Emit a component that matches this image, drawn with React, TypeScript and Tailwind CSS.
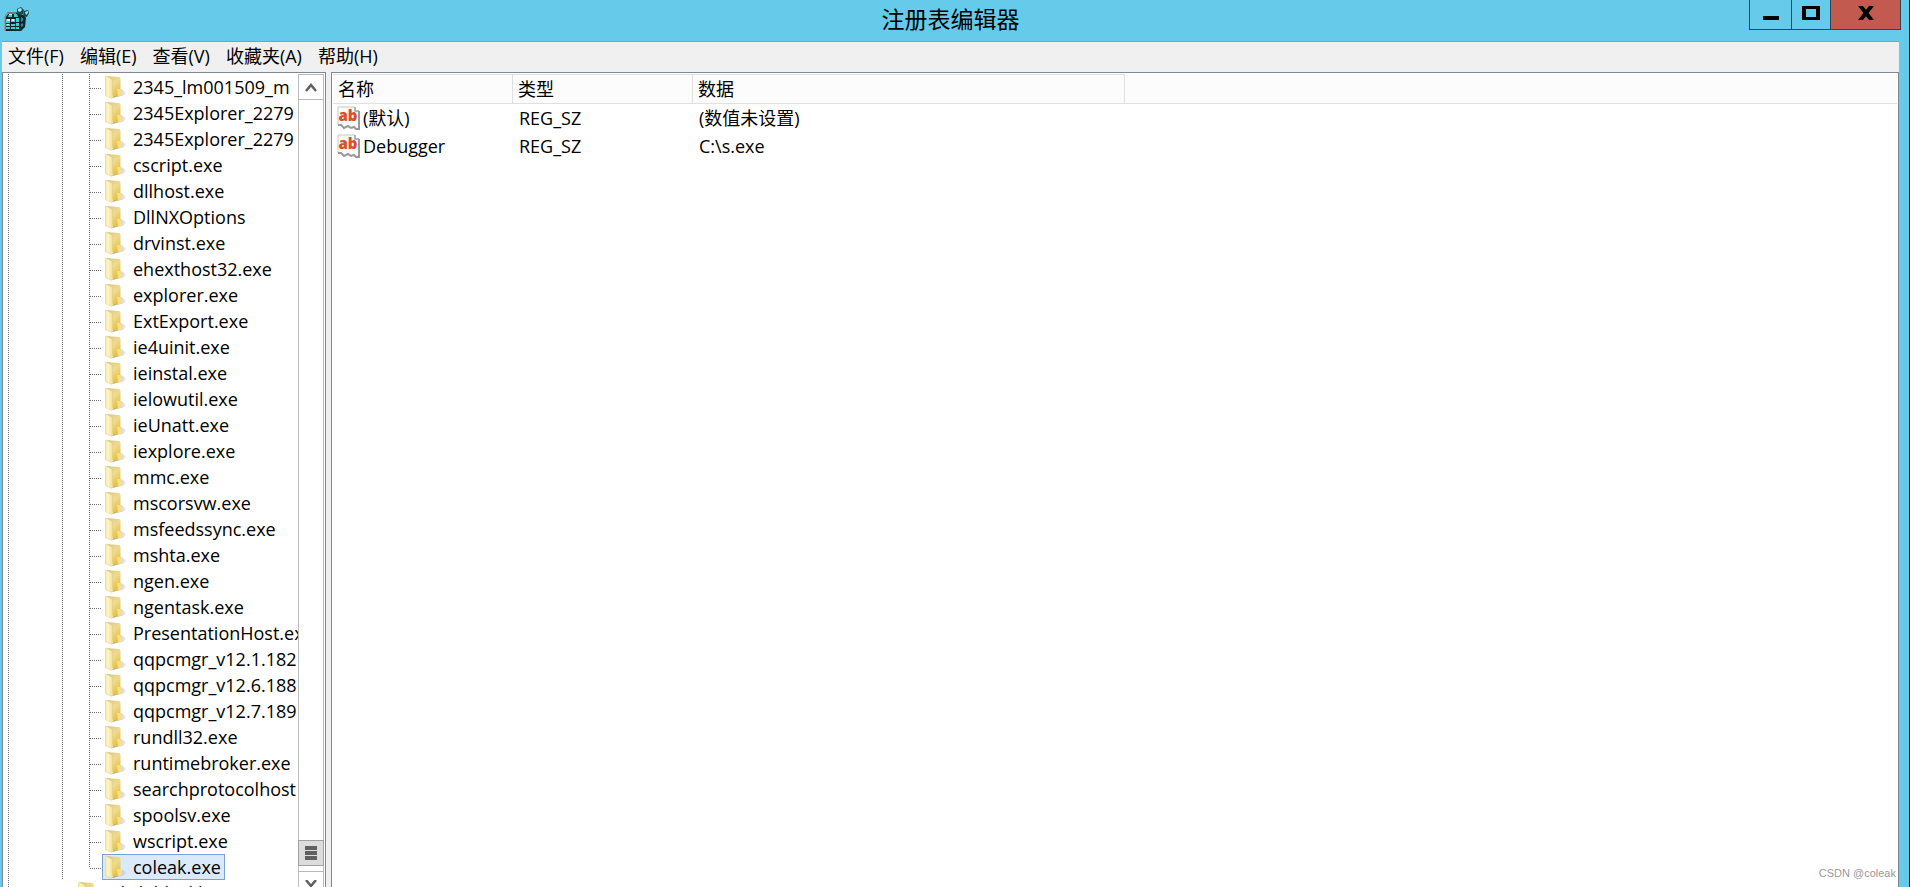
import { clsx } from 'clsx';

const MENUS = ['文件(F)', '编辑(E)', '查看(V)', '收藏夹(A)', '帮助(H)'];

const KEYS = [
  '2345_lm001509_m',
  '2345Explorer_2279',
  '2345Explorer_2279',
  'cscript.exe',
  'dllhost.exe',
  'DllNXOptions',
  'drvinst.exe',
  'ehexthost32.exe',
  'explorer.exe',
  'ExtExport.exe',
  'ie4uinit.exe',
  'ieinstal.exe',
  'ielowutil.exe',
  'ieUnatt.exe',
  'iexplore.exe',
  'mmc.exe',
  'mscorsvw.exe',
  'msfeedssync.exe',
  'mshta.exe',
  'ngen.exe',
  'ngentask.exe',
  'PresentationHost.ex',
  'qqpcmgr_v12.1.182',
  'qqpcmgr_v12.6.188',
  'qqpcmgr_v12.7.189',
  'rundll32.exe',
  'runtimebroker.exe',
  'searchprotocolhost',
  'spoolsv.exe',
  'wscript.exe',
  'coleak.exe',
];

const VALUES = [
  { name: '(默认)', type: 'REG_SZ', data: '(数值未设置)' },
  { name: 'Debugger', type: 'REG_SZ', data: 'C:\\s.exe' },
];

const COLUMNS = ['名称', '类型', '数据'];

// 1px on, 1px off, so the dots run on from row to row
const DOTS_Y = 'w-px shrink-0 bg-[repeating-linear-gradient(180deg,#707070_0_1px,transparent_1px_2px)]';
const DOTS_X = 'h-px shrink-0 bg-[repeating-linear-gradient(90deg,#707070_0_1px,transparent_1px_2px)]';

export default function App() {
  return (
    <div className="flex h-screen flex-col overflow-hidden border-r border-[#1c1c1c] bg-[#66caea] pr-[10px] pl-[2px] font-['Open_Sans','Noto_Sans_CJK_SC',sans-serif] text-[18px] leading-[26px] text-black">
      <TitleBar />

      <div className="flex min-h-0 flex-1 flex-col border-t border-[#7d9fb0] bg-[#f0f0f0]">
        <nav className="flex h-[30px] shrink-0 items-start gap-[16px] pt-px pl-[6px]">
          {MENUS.map((m) => (
            <button key={m} type="button" className="whitespace-nowrap">{m}</button>
          ))}
        </nav>

        <div className="flex min-h-0 flex-1 gap-[5px]">
          <KeyTree />
          <ValueList />
        </div>
      </div>
    </div>
  );
}

function TitleBar() {
  return (
    <header className="grid h-[41px] shrink-0 grid-cols-[1fr_auto_1fr] items-start">
      <RegeditIcon />
      <h1 className="pt-[5px] text-[23px] leading-[28px]">注册表编辑器</h1>
      <div className="-mr-[2px] flex h-[30px] justify-self-end border-x border-b border-[#2d4650]">
        <button type="button" aria-label="最小化" className="flex w-[42px] items-center justify-center border-r border-[#2d4650]">
          <svg width="16" height="16" viewBox="0 0 16 16"><path d="M0 9h16v4H0z" /></svg>
        </button>
        <button type="button" aria-label="最大化" className="flex w-[39px] items-center justify-center border-r border-[#2d4650]">
          <svg width="18" height="18" viewBox="0 0 18 18"><path fillRule="evenodd" d="M0 0h18v14H0zM4 3v8h10V3z" /></svg>
        </button>
        <button type="button" aria-label="关闭" className="flex w-[69px] items-center justify-center bg-[#c35a50]">
          <svg width="16" height="18" viewBox="0 0 16 18"><path d="M0 0h5l3 3.800L11 0h5l-5.500 7 5.500 7h-5l-3-3.800L5 14H0l5.500-7z" /></svg>
        </button>
      </div>
    </header>
  );
}

function KeyTree() {
  return (
    <section aria-label="注册表项" className="flex w-[324px] shrink-0 border border-b-0 border-[#828790] bg-white pt-px pr-px">
      <div className="min-w-0 flex-1 overflow-hidden">
        <ul>
          {KEYS.map((name, i) => {
            const last = i === KEYS.length - 1;
            return (
              <li key={i} className="flex h-[26px]">
                <span className={clsx(DOTS_Y, 'mr-[53px] ml-[5px]')} />
                <span className={clsx(DOTS_Y, 'mr-[26px]')} />
                <span className={clsx(DOTS_Y, last && 'mb-[12px]')} />
                <span className={clsx(DOTS_X, 'mt-[14px] w-[12px]')} />
                <button
                  type="button"
                  className={clsx(
                    'flex items-center gap-[7px] border pr-[3px] pl-[2px] whitespace-nowrap',
                    last ? 'border-[#7da2ce] bg-[#dbe9fd]' : 'border-transparent'
                  )}
                >
                  <FolderIcon />
                  {name}
                </button>
              </li>
            );
          })}
          <li className="flex h-[26px]">
            <span className={clsx(DOTS_Y, 'mr-[66px] ml-[5px]')} />
            <button type="button" className="flex items-center gap-[7px] border border-transparent pl-[2px] whitespace-nowrap">
              <FolderIcon />
              SilFileblockl
            </button>
          </li>
        </ul>
      </div>
      <TreeScrollbar />
    </section>
  );
}

function TreeScrollbar() {
  return (
    <div className="flex w-[26px] shrink-0 flex-col border-x border-[#bcbcbc]">
      <button type="button" aria-label="向上滚动" className="flex h-[26px] shrink-0 items-center justify-center border-y border-[#b9b9b9]">
        <svg width="12" height="10" viewBox="0 0 12 10" fill="none" stroke="#606060" strokeWidth="2.500"><path d="M1 9l5-6 5 6" /></svg>
      </button>
      <div className="flex-1" />
      <div className="-mx-px flex h-[26px] shrink-0 flex-col items-center justify-center gap-px border border-[#a0a0a0] bg-[#dcdcdc]">
        <span className="h-[4px] w-[12px] bg-[#606060]" />
        <span className="h-[4px] w-[12px] bg-[#606060]" />
        <span className="h-[4px] w-[12px] bg-[#606060]" />
      </div>
      <button type="button" aria-label="向下滚动" className="mt-[5px] flex h-[16px] shrink-0 items-end justify-center overflow-hidden border-t border-[#b9b9b9]">
        <svg width="12" height="7" viewBox="0 0 12 7" fill="none" stroke="#606060" strokeWidth="2.500"><path d="M1 0l5 6 5-6" /></svg>
      </button>
    </div>
  );
}

function ValueList() {
  return (
    <section aria-label="值" className="relative min-w-0 flex-1 border border-b-0 border-[#828790] bg-white px-px pt-px">
      <table className="w-full table-fixed border-separate border-spacing-0 text-left">
        <thead>
          <tr className="h-[30px] bg-[#fcfcfc]">
            {COLUMNS.map((c, i) => (
              <th
                key={c}
                className={clsx(
                  'border-y border-r border-[#e0e0e0] p-0 pl-[5px] font-normal',
                  i < 2 ? 'w-[180px]' : 'w-[432px]'
                )}
              >
                {c}
              </th>
            ))}
            <td className="border-b border-[#e0e0e0]" />
          </tr>
        </thead>
        <tbody>
          {VALUES.map((v) => (
            <tr key={v.name} className="h-[28px]">
              <td className="p-0">
                <div className="flex items-center gap-[2px] pl-[4px]">
                  <StringIcon />
                  {v.name}
                </div>
              </td>
              <td className="p-0 pl-[6px]">{v.type}</td>
              <td className="p-0 pl-[6px]">{v.data}</td>
              <td />
            </tr>
          ))}
        </tbody>
      </table>
      <span className="absolute right-[2px] bottom-[6px] font-['Liberation_Sans',sans-serif] text-[11px] leading-[16px] text-[#999]">CSDN @coleak</span>
    </section>
  );
}

function RegeditIcon() {
  return (
    <svg className="mt-[7px] ml-[2px]" width="26" height="25" viewBox="0 0 26 25">
      <path d="M1 9l3-4h8l3 2 5 1 2 3-1 9-4 4H1z" fill="#07272b" />
      <path d="M1 24V10l3-4h8" fill="none" stroke="#8a9a9c" strokeWidth="1.500" />
      <path d="M5 7h3v3H4zM10 7h3l1 3h-4zM2 12h4v4H2zM7 12h4v3H7zM12 11h3v4h-3zM2 17h4v2H2zM7 17h4v2H7zM12 16h3v3h-3zM2 20h4v2H2zM7 20h4v2H7zM12 20h3v2h-3z" fill="#3fcfcb" />
      <path d="M3 12h3v2H3zM8 12h2v2H8zM5 7h3v1H5zM3 17h2v1H3z" fill="#dcffff" />
      <path d="M13 2l4-2 3 3-1 4-4 1-2-3zM20 4l4-1 1 3-2 4-4-1z" fill="#14474d" />
      <path d="M14 2l3-1 1 2-2 2-2-1zM21 5l3-1v2l-2 2z" fill="#9ceeee" />
      <path d="M17 10l2 1v3l-2 1zM17 17l2-1v3l-2 1z" fill="#1f8f92" />
    </svg>
  );
}

function FolderIcon() {
  return (
    <svg className="shrink-0" width="21" height="24" viewBox="0 0 21 24">
      <defs>
        <linearGradient id="folderFront" x1="0" x2="1" y1="0" y2="0">
          <stop offset="0" stopColor="#f3e29a" />
          <stop offset="0.400" stopColor="#fdf6cd" />
          <stop offset="1" stopColor="#f2df8e" />
        </linearGradient>
        <linearGradient id="folderBack" x1="0" x2="0.600" y1="0" y2="1">
          <stop offset="0" stopColor="#d9c684" />
          <stop offset="0.500" stopColor="#eddb92" />
          <stop offset="1" stopColor="#e5bf3f" />
        </linearGradient>
        <linearGradient id="folderShade" x1="0" x2="1" y1="0" y2="0">
          <stop offset="0" stopColor="#808080" stopOpacity="0.900" />
          <stop offset="1" stopColor="#b0b0b0" stopOpacity="0.200" />
        </linearGradient>
      </defs>
      <path d="M7 23l9-9 5 3q0 3-5 4z" fill="url(#folderShade)" />
      <path d="M2 1l12 1q1.500 0 1.500 2v16L8 22z" fill="url(#folderBack)" />
      <path d="M12 14h4q1 0 1 1v5l-4 1.500z" fill="#f7df86" />
      <path d="M0 2q0-1 1-1l5.500 3q1 .5 1 1.500v17q0 1-1 .8L1 21q-1-.3-1-1.200z" fill="url(#folderFront)" stroke="#e3cc7a" strokeWidth="0.500" />
    </svg>
  );
}

function StringIcon() {
  return (
    <svg className="shrink-0" width="24" height="24" viewBox="0 0 24 24">
      <path d="M1 1h17l4 4v18h-3l-2-2-3 1-3-2-4 2-3-3H1z" fill="#fafafa" />
      <path d="M1 19V1h17" fill="none" stroke="#c8c8c8" />
      <path d="M18 1v4h4" fill="none" stroke="#a0a0a0" strokeWidth="1.500" />
      <path d="M22 5v18h-3l-2-2-3 1-3-2-4 2-3-3H1" fill="none" stroke="#999" strokeWidth="2" />
      <text x="11" y="15" textAnchor="middle" fill="#d9502c" className="font-['Open_Sans',sans-serif] text-[15px] font-extrabold">ab</text>
    </svg>
  );
}
